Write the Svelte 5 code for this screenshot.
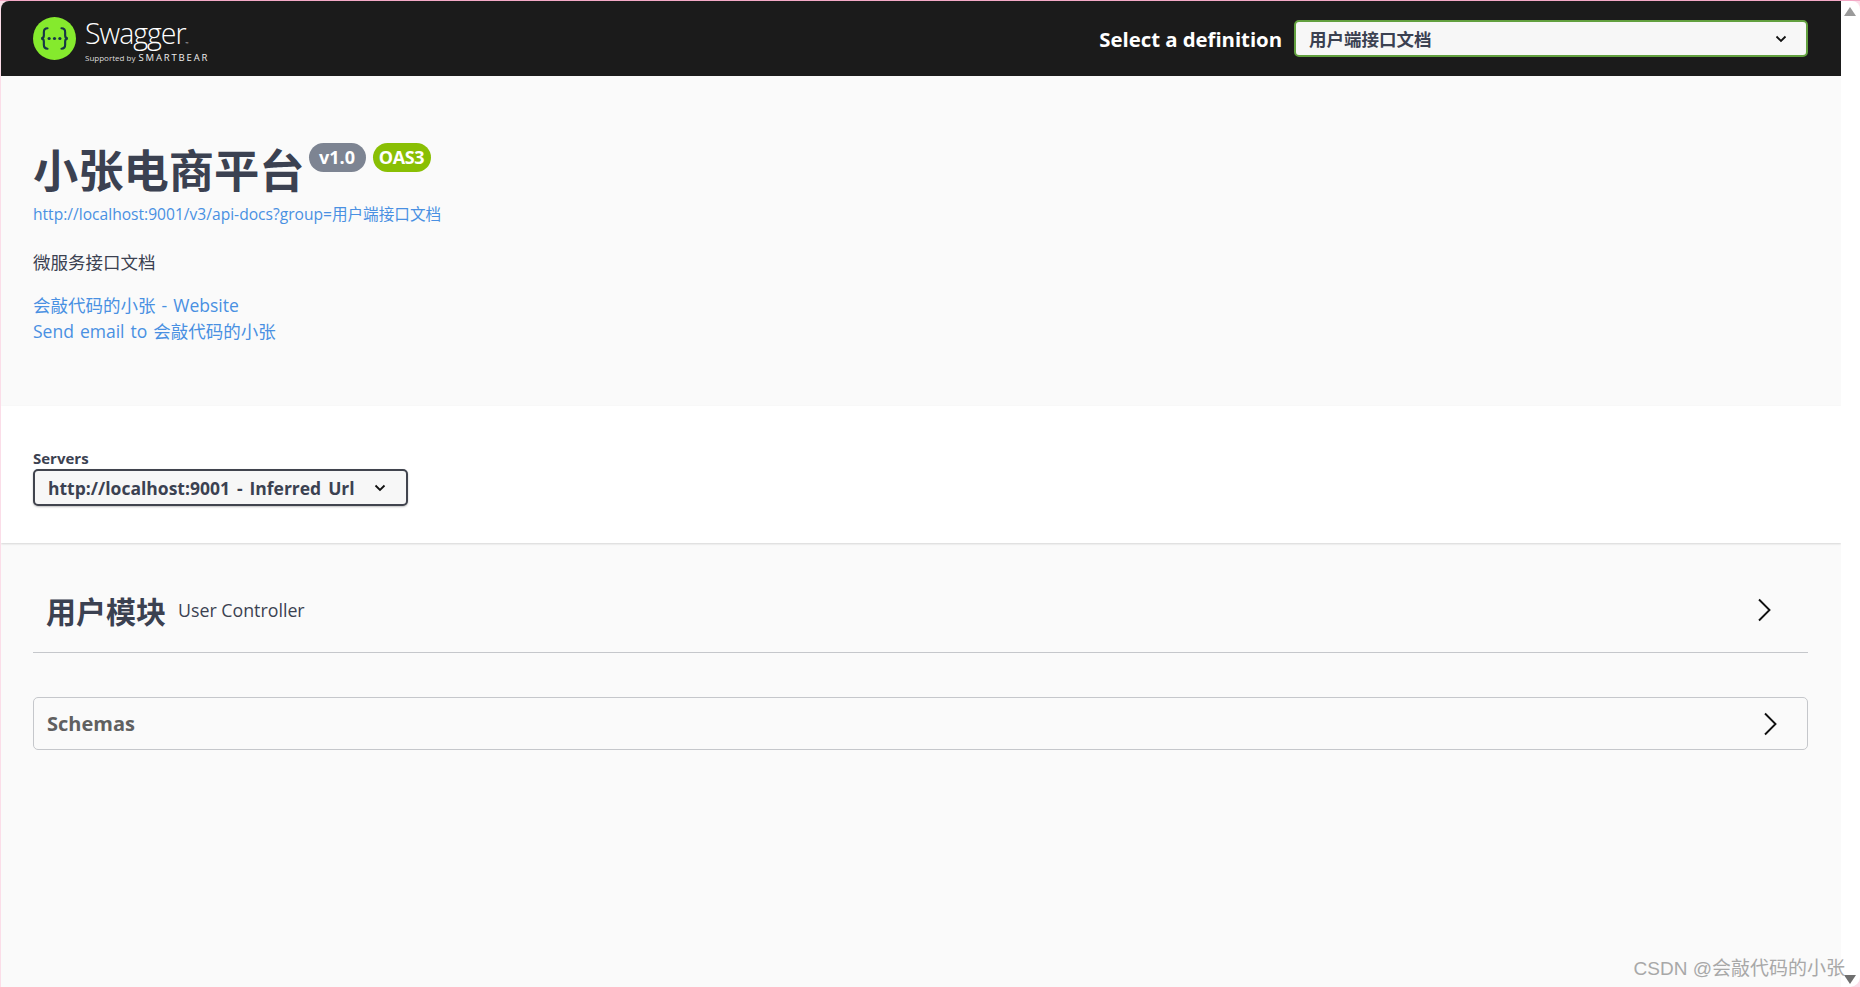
<script lang="ts">
	const docUrl = 'http://localhost:9001/v3/api-docs?group=用户端接口文档';
</script>

<div class="window">
	<div class="page">
		<header class="topbar">
			<div class="brand">
				<svg class="logo" viewBox="0 0 40 40" width="43" height="43">
					<circle cx="20" cy="20" r="20" fill="#85ea2d" />
					<g fill="none" stroke="#173647" stroke-width="2" stroke-linecap="round">
						<path d="M13.5 10.5c-3 0-3.4 1.6-3.4 3.6v3.2c0 1.6-.9 2.7-2.6 2.7 1.7 0 2.6 1.1 2.6 2.7v3.2c0 2 .4 3.6 3.4 3.6" />
						<path d="M26.5 10.5c3 0 3.4 1.6 3.4 3.6v3.2c0 1.6.9 2.7 2.6 2.7-1.7 0-2.6 1.1-2.6 2.7v3.2c0 2-.4 3.6-3.4 3.6" />
					</g>
					<g fill="#173647">
						<circle cx="15" cy="20" r="1.5" />
						<circle cx="20" cy="20" r="1.5" />
						<circle cx="25" cy="20" r="1.5" />
					</g>
				</svg>
				<div class="wordmark">
					<div class="name">Swagger<sup>™</sup></div>
					<div class="support">Supported by <b>SMARTBEAR</b></div>
				</div>
			</div>
			<div class="definition">
				<span class="definition-label">Select a definition</span>
				<div class="definition-select">
					<span>用户端接口文档</span>
					<svg viewBox="0 0 12 8" width="12" height="8"><path d="M1.5 1.5 6 6l4.5-4.5" fill="none" stroke="#111" stroke-width="1.8" /></svg>
				</div>
			</div>
		</header>

		<section class="info">
			<div class="title-row">
				<h1>小张电商平台</h1>
				<span class="badge version">v1.0</span>
				<span class="badge oas">OAS3</span>
			</div>
			<a class="doc-url" href="#top">{docUrl}</a>
			<p class="description">微服务接口文档</p>
			<a class="contact" href="#top">会敲代码的小张 - Website</a>
			<a class="contact" href="#top">Send email to 会敲代码的小张</a>
		</section>

		<section class="servers">
			<div class="servers-title">Servers</div>
			<div class="server-select">
				<span>http://localhost:9001 - Inferred Url</span>
				<svg viewBox="0 0 12 8" width="12" height="8"><path d="M1.5 1.5 6 6l4.5-4.5" fill="none" stroke="#111" stroke-width="1.8" /></svg>
			</div>
		</section>

		<main class="content">
			<div class="tag-row">
				<h3>用户模块</h3>
				<span class="tag-desc">User Controller</span>
				<svg class="arrow" viewBox="0 0 14 24" width="14" height="24"><path d="M2 1.5 12.5 12 2 22.5" fill="none" stroke="#111" stroke-width="1.9" /></svg>
			</div>
			<div class="schemas">
				<span>Schemas</span>
				<svg class="arrow" viewBox="0 0 14 24" width="14" height="24"><path d="M2 1.5 12.5 12 2 22.5" fill="none" stroke="#111" stroke-width="1.9" /></svg>
			</div>
		</main>
	</div>

	<aside class="scrollbar">
		<span class="up"></span>
		<span class="down"></span>
	</aside>
	<div class="watermark">CSDN @会敲代码的小张</div>
</div>

<style>
	:global(body) {
		margin: 0;
		background: #fbdde8;
	}

	.window {
		position: relative;
		display: flex;
		width: 1860px;
		height: 987px;
		box-sizing: border-box;
		padding-left: 1px;
		border-top: 1px solid #f4a9c6;
		overflow: hidden;
		font-family: 'Open Sans', 'Noto Sans CJK SC', sans-serif;
		color: #3b4151;
		background: #fbdde8;
	}

	.page {
		flex: 1;
		min-width: 0;
		display: flex;
		flex-direction: column;
		background: #fafafa;
		border-top-left-radius: 8px;
		overflow: hidden;
	}

	.topbar {
		flex: none;
		height: 75px;
		box-sizing: border-box;
		display: flex;
		align-items: center;
		justify-content: space-between;
		padding: 0 33px 0 32px;
		background: #1b1b1b;
	}

	.brand {
		display: flex;
		align-items: center;
		gap: 9px;
	}

	.wordmark {
		color: #fff;
		line-height: 1;
		padding-top: 4px;
	}

	.name {
		font-size: 28.5px;
		font-weight: 300;
		letter-spacing: -1px;
		height: 34px;
	}

	.name sup {
		font-size: 4px;
		vertical-align: -1px;
	}

	.support {
		font-size: 8px;
		color: #ddd;
		white-space: nowrap;
	}

	.support b {
		font-size: 9.5px;
		font-weight: 400;
		letter-spacing: 1.85px;
		color: #eee;
		margin-left: 1px;
	}

	.definition {
		display: flex;
		align-items: center;
		gap: 12px;
	}

	.definition-label {
		font-size: 20.4px;
		font-weight: 700;
		color: #fff;
		letter-spacing: -0.05px;
	}

	.definition-select {
		width: 514px;
		height: 37px;
		box-sizing: border-box;
		display: flex;
		align-items: center;
		justify-content: space-between;
		padding: 0 19px 0 13px;
		background: #f7f7f7;
		border: 2px solid #62a03f;
		border-radius: 5px;
		font-size: 17.5px;
		font-weight: 700;
	}

	.info {
		flex: none;
		height: 330px;
		box-sizing: border-box;
		padding: 69px 33px 0 32px;
		display: flex;
		flex-direction: column;
		align-items: flex-start;
	}

	.title-row {
		display: flex;
		align-items: flex-start;
		height: 52px;
	}

	h1 {
		margin: 0;
		font-size: 45.25px;
		line-height: 52px;
		font-weight: 700;
		white-space: nowrap;
	}

	.badge {
		margin-top: -2px;
		height: 29px;
		line-height: 28px;
		border-radius: 15px;
		font-size: 18px;
		font-weight: 700;
		color: #fff;
		text-align: center;
		box-sizing: border-box;
	}

	.version {
		width: 57px;
		margin-left: 4px;
		background: #7d8492;
	}

	.oas {
		width: 58px;
		margin-left: 7px;
		background: #89bf04;
		letter-spacing: -0.4px;
	}

	a {
		color: #4990e2;
		text-decoration: none;
	}

	.doc-url {
		margin-top: 6px;
		font-size: 15.6px;
		line-height: 22px;
		white-space: nowrap;
	}

	.description {
		margin: 24px 0 17px;
		font-size: 17.5px;
		line-height: 26px;
	}

	.contact {
		font-size: 17.5px;
		line-height: 26px;
		white-space: nowrap;
		word-spacing: 1.5px;
	}

	.servers {
		flex: none;
		height: 137px;
		box-sizing: border-box;
		padding: 43px 0 0 32px;
		background: #fff;
		box-shadow: 0 1px 2px rgba(0, 0, 0, 0.15);
		position: relative;
	}

	.servers-title {
		font-size: 15px;
		font-weight: 700;
		line-height: 18px;
	}

	.server-select {
		width: 375px;
		height: 37px;
		margin-top: 2px;
		box-sizing: border-box;
		display: flex;
		align-items: center;
		justify-content: space-between;
		padding: 0 20px 0 13px;
		background: #f7f7f7;
		border: 2px solid #41444e;
		border-radius: 5px;
		box-shadow: 0 1px 2px rgba(0, 0, 0, 0.25);
		font-size: 17.5px;
		font-weight: 700;
		white-space: nowrap;
		word-spacing: 2.4px;
	}

	.content {
		flex: 1;
		padding: 25px 33px 0 32px;
	}

	.tag-row {
		height: 85px;
		box-sizing: border-box;
		display: flex;
		align-items: center;
		padding: 0 37px 0 13px;
		border-bottom: 1px solid #c5c7cb;
	}

	h3 {
		margin: 0;
		font-size: 30px;
		font-weight: 700;
		white-space: nowrap;
	}

	.tag-desc {
		margin-left: 12px;
		font-size: 17.8px;
		flex: 1;
	}

	.schemas {
		margin-top: 44px;
		height: 53px;
		box-sizing: border-box;
		display: flex;
		align-items: center;
		justify-content: space-between;
		padding: 0 30px 0 13px;
		border: 1px solid #c5c7cb;
		border-radius: 5px;
		font-size: 20px;
		font-weight: 700;
		color: #606060;
	}

	.scrollbar {
		flex: none;
		width: 19px;
		background: #fff;
		position: relative;
		border-top-right-radius: 8px;
		border-bottom-right-radius: 10px;
	}

	.up,
	.down {
		position: absolute;
		left: 3px;
		width: 0;
		height: 0;
		border-left: 6px solid transparent;
		border-right: 6px solid transparent;
	}

	.up {
		top: 6px;
		border-bottom: 9px solid #9a9a9a;
	}

	.down {
		bottom: 3px;
		border-top: 9px solid #6f6f6f;
	}

	.watermark {
		position: absolute;
		right: 15px;
		bottom: 6px;
		font-family: 'Liberation Sans', 'Noto Sans CJK SC', sans-serif;
		font-size: 19px;
		line-height: 24px;
		color: #a8a8a8;
	}
</style>
